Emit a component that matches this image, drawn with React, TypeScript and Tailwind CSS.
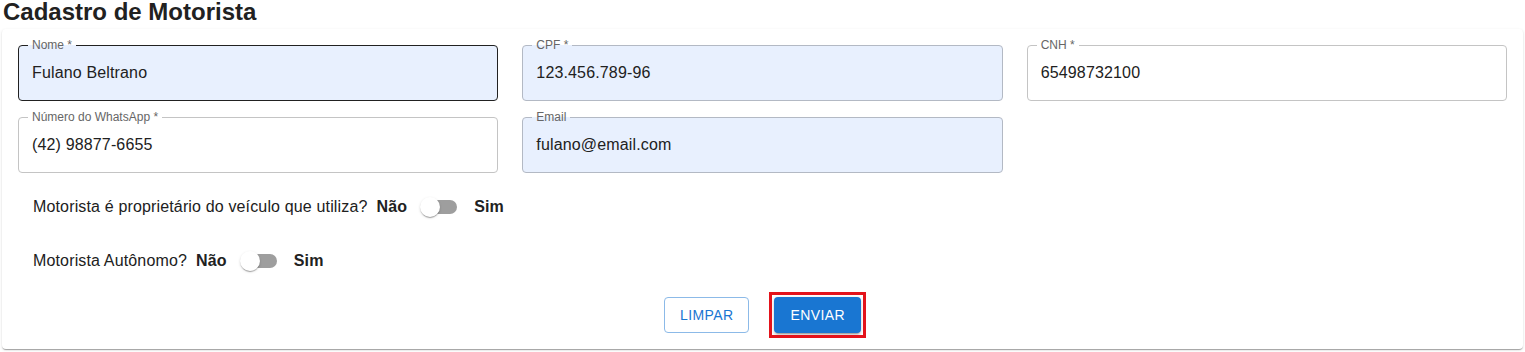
import React from 'react';
import clsx from 'clsx';

type FieldProps = {
  label: string;
  value: string;
  autofill?: boolean;
  hovered?: boolean;
};

// Outlined text field with a floating label sitting in the border notch
function Field({ label, value, autofill, hovered }: FieldProps) {
  return (
    <div
      className={clsx(
        'relative h-[56px] rounded-[4px] border',
        autofill ? 'bg-[#e8f0fe]' : 'bg-white',
        hovered ? 'border-[#212121]' : autofill ? 'border-[#b3b9c4]' : 'border-[#c4c4c4]'
      )}
    >
      <span
        className={clsx(
          'absolute left-[9px] top-[-1px] -translate-y-1/2 px-[4px] text-[12px] leading-[14px] text-[#666666]',
          autofill ? 'bg-linear-to-b from-white from-50% to-[#e8f0fe] to-50%' : 'bg-white'
        )}
      >
        {label}
      </span>
      <div className="flex h-full items-center pl-[13px] text-[16px] tracking-[0.15px] text-[#212121]">{value}</div>
    </div>
  );
}

function Toggle() {
  return (
    <span className="relative ml-1 inline-block h-[38px] w-[58px] shrink-0">
      <span className="absolute left-[12px] top-[12px] h-[14px] w-[34px] rounded-full bg-[#9e9e9e]" />
      <span className="absolute left-[9px] top-[9px] h-[20px] w-[20px] rounded-full bg-white shadow-[0_2px_1px_-1px_rgba(0,0,0,0.2),0_1px_1px_0_rgba(0,0,0,0.14),0_1px_3px_0_rgba(0,0,0,0.12)]" />
    </span>
  );
}

function YesNo({ question, className }: { question: string; className?: string }) {
  return (
    <div className={clsx('flex h-[38px] items-center pl-[15px] text-[16px] tracking-[0.15px] text-[#212121]', className)}>
      <span>{question}</span>
      <span className="ml-[9px] font-bold">Não</span>
      <Toggle />
      <span className="ml-[5px] font-bold">Sim</span>
    </div>
  );
}

export default function App() {
  return (
    <div className="min-h-[352px] bg-white px-[2px] font-['Liberation_Sans',Arial,sans-serif]">
      <h1 className="mb-[5px] pl-px text-[24px] font-bold leading-[24px] text-[#212121]">Cadastro de Motorista</h1>

      <div className="rounded-[4px] bg-white p-4 shadow-[0_2px_1px_-1px_rgba(0,0,0,0.2),0_1px_1px_0_rgba(0,0,0,0.14),0_1px_3px_0_rgba(0,0,0,0.12)]">
        <div className="grid grid-cols-3 gap-x-6 gap-y-4">
          <Field label="Nome *" value="Fulano Beltrano" autofill hovered />
          <Field label="CPF *" value="123.456.789-96" autofill />
          <Field label="CNH *" value="65498732100" />
          <Field label="Número do WhatsApp *" value="(42) 98877-6655" />
          <Field label="Email" value="fulano@email.com" autofill />
        </div>

        <YesNo className="mt-[15px]" question="Motorista é proprietário do veículo que utiliza?" />
        <YesNo className="mt-[16px]" question="Motorista Autônomo?" />

        {/* Form actions */}
        <div className="mt-[17px] flex items-center justify-center gap-[25px]">
          <button
            type="button"
            className="h-[36px] rounded-[4px] border border-[#8cbae8] bg-white px-[15px] text-[14px] uppercase tracking-[0.4px] text-[#1976d2]"
          >
            Limpar
          </button>
          <button
            type="button"
            className="relative h-[36px] rounded-[4px] bg-[#1976d2] px-4 text-[14px] uppercase tracking-[0.4px] text-white shadow-[0_3px_1px_-2px_rgba(0,0,0,0.2),0_2px_2px_0_rgba(0,0,0,0.14),0_1px_5px_0_rgba(0,0,0,0.12)]"
          >
            Enviar
            {/* highlight box drawn over the submit button */}
            <span className="pointer-events-none absolute -inset-[5px] border-[3px] border-[#e3131b]" />
          </button>
        </div>
      </div>
    </div>
  );
}
